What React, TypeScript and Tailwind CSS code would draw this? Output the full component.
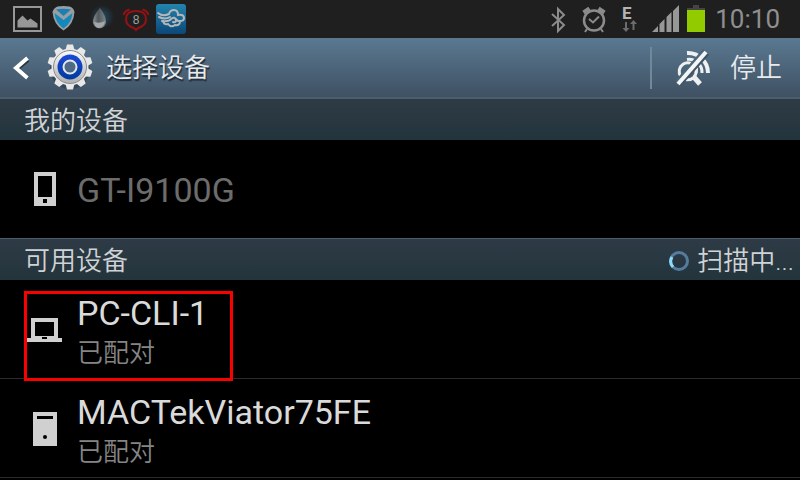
import type { ReactNode } from "react";

const StatusBar = () => {
  return (
    <div className="flex h-[38px] items-center bg-[#1f1f1f] pr-5 pl-3">
      <div className="flex flex-1 items-center">
        <svg className="mr-[10px]" width="30" height="38" viewBox="12 0 30 38">
          <rect x="14" y="7" width="27" height="24" fill="#1c1c1c" stroke="#979797" strokeWidth="2" />
          <path d="M17.500 27.500v-7l5-5 5 5 3-2 7 5v4z" fill="#979797" />
        </svg>
        <svg className="mr-[10px]" width="24" height="38" viewBox="52 0 24 38">
          <path d="M52.500 12q1-4 5-5.500 6-1 12 0 4 1 5 5.500-1 13-11 18.500-10-6-11-18.500z" fill="#989fa3" />
          <path d="M54.500 13l9 7 9-7q-1 10-9 15.500-8-5.500-9-15.500z" fill="#1488bd" />
          <path d="M56 9.500q7-1.500 15 0l-7.500 6.500z" fill="#1c7fb0" />
        </svg>
        <svg className="mr-2" width="28" height="38" viewBox="86 0 28 38">
          <defs>
            <radialGradient id="glow">
              <stop offset="0" stopColor="#24506a" />
              <stop offset="1" stopColor="#1f1f1f" />
            </radialGradient>
            <linearGradient id="drop" x1="0" y1="0" x2="1" y2="0">
              <stop offset="0" stopColor="#8d9294" />
              <stop offset=".4" stopColor="#50585c" />
              <stop offset="1" stopColor="#7d8386" />
            </linearGradient>
          </defs>
          <circle cx="102" cy="17" r="12" fill="url(#glow)" />
          <path d="M100 8q6 8 6 14a6.500 6.500 0 0 1-13 0q0-6 7-14z" fill="url(#drop)" />
          <path d="M94 22q6 2 11-1-1 7-6 7-4 0-5-6z" fill="#a5a8aa" />
        </svg>
        <svg className="mr-[6px]" width="28" height="38" viewBox="122 0 28 38">
          <g fill="none" stroke="#941214" strokeWidth="2">
            <path d="M123.500 15q1-4 6-5.500M142.500 9.500q5 1.500 6 5.500" />
            <path d="M126 19q0-8 10-8t10 8q0 7-8 9l-2 2-2-2q-8-2-8-9z" />
          </g>
          <text x="136" y="24" textAnchor="middle" fill="#a2a2a2" fontSize="12" fontWeight="400" fontFamily="Liberation Sans, sans-serif">
            8
          </text>
        </svg>
        <svg width="31" height="38" viewBox="157 0 31 38">
          <defs>
            <linearGradient id="weather" x1="0" y1="0" x2="0" y2="1">
              <stop offset="0" stopColor="#2384ae" />
              <stop offset="1" stopColor="#0b4778" />
            </linearGradient>
          </defs>
          <rect x="157" y="4" width="30" height="30" rx="3" fill="url(#weather)" />
          <g fill="none" stroke="#b4b7b9" strokeWidth="2" strokeLinecap="round">
            <path d="M159 13q5 4 11 1 1-4 5-4 4 0 4 5 6-1 6 3 0 3-4 3 0 5-5 4-4 3-7-1-4 1-5-3" />
            <path d="M160 17q6 3 11 0M163 21q7 1 9-2 4-3 5 1 0 3-3 2M180 21q-2 0-3-2" />
          </g>
        </svg>
      </div>
      <svg width="170" height="38" viewBox="545 0 170 38">
        <path d="M552 14l12 11-6 6V9l6 6-12 11" fill="none" stroke="#8b8b8b" strokeWidth="2" />
        <g fill="none" stroke="#8b8b8b">
          <circle cx="594" cy="20.500" r="10" strokeWidth="2.500" />
          <path d="M589 19l4 3.500 6-6" strokeWidth="2" />
          <path d="M583.500 12.500l6-4M604.500 12.500l-6-4" strokeWidth="4" />
          <path d="M587 29l-2 3M601 29l2 3" strokeWidth="2" />
        </g>
        <text x="622" y="19" fill="#b4b4b4" fontSize="17" fontWeight="700" fontFamily="Roboto, sans-serif">
          E
        </text>
        <path d="M625 22h2v6h2.500l-3.500 4-3.500-4h2.500zM632.500 30h2v-6h2.500l-3.500-4-3.500 4h2.500z" fill="#6c6c6c" />
        <path d="M652 32l6-6v6zM659.500 32v-8l5-5v13zM666.500 32V17l5-5v20zM673 32V11l6-6v27z" fill="#979797" />
        <path d="M693 5h6v3h6v2h-18V8h6z" fill="#444" />
        <path d="M687 10h18v22h-18z" fill="#91cb00" />
      </svg>
      <span className="font-[Roboto,sans-serif] text-[26px] leading-9 font-normal text-[#8f8f8f]">10:10</span>
    </div>
  );
};

const teeth = [0, 36, 72, 108, 144, 180, 216, 252, 288, 324];

const SettingsIcon = () => {
  return (
    <svg width="48" height="50" viewBox="0 0 48 50">
      <defs>
        <linearGradient id="metal" x1="0" y1="0" x2="0" y2="1">
          <stop offset="0" stopColor="#fafafa" />
          <stop offset="1" stopColor="#b0b0b0" />
        </linearGradient>
        <linearGradient id="ring" x1="0" y1="0" x2="0" y2="1">
          <stop offset="0" stopColor="#1a48d8" />
          <stop offset="1" stopColor="#003c9c" />
        </linearGradient>
      </defs>
      <circle cx="24" cy="26" r="20" fill="#26333f" opacity=".5" />
      <g fill="#e8e8e8">
        {teeth.map((angle) => (
          <path key={angle} d="M19.500 7l1.500-5.500h6L28.500 7z" transform={`rotate(${angle} 24 24)`} />
        ))}
        <circle cx="24" cy="24" r="18.500" />
      </g>
      <circle cx="24" cy="24" r="16.500" fill="url(#metal)" stroke="#8d8d8d" />
      <circle cx="24" cy="24" r="12.500" fill="url(#ring)" />
      <circle cx="24" cy="24" r="6.500" fill="#4d6b87" stroke="#e3e6ea" strokeWidth="2" />
    </svg>
  );
};

const StopScanIcon = () => {
  return (
    <svg width="34" height="40" viewBox="0 0 34 40">
      <g fill="none" stroke="#eef0f2" strokeWidth="3">
        <path d="M17 30a8.500 8.500 0 1 1 2-11q3 5-1 10" />
        <path d="M11 5a20 20 0 0 1 21 20" strokeWidth="4" />
        <path d="M11 11.500a13 13 0 0 1 15 13.500M20 18q1 3 0 7" />
      </g>
      <path d="M17 28l7 8" stroke="#eef0f2" strokeWidth="5" />
      <path d="M0 34L28 2" stroke="#4c6579" strokeWidth="3" />
      <path d="M4 37L32 6" stroke="#405467" strokeWidth="3" />
      <path d="M2 36L30 4" stroke="#f4f5f6" strokeWidth="4" />
    </svg>
  );
};

const Header = () => {
  return (
    <header className="flex h-[60px] items-center border-b border-[#4b5e6c] bg-linear-to-b from-[#5a7991] to-[#3f5163] pr-[18px] pl-3 text-[#e8eaec]">
      <a href="#back" aria-label="Back" className="flex flex-1 items-center">
        <svg width="18" height="26" viewBox="0 0 18 26">
          <path d="M16 5L5 14l11 9" fill="none" stroke="#26333f" strokeWidth="4" />
          <path d="M15.500 3L4 13l11.500 10" fill="none" stroke="#fff" strokeWidth="4" />
        </svg>
        <span className="ml-4">
          <SettingsIcon />
        </span>
        <h1 className="ml-3 text-[26px] leading-9 text-shadow-[1px_2px_1px_#1f2b36]">选择设备</h1>
      </a>
      <div className="mr-6 h-[42px] w-[2px] bg-[#71889b]" />
      <button className="flex items-center gap-5 text-[26px] leading-9">
        <StopScanIcon />
        停止
      </button>
    </header>
  );
};

const SectionTitle = ({ title, children }: { title: string; children?: ReactNode }) => {
  return (
    <div className="flex h-[42px] items-center justify-between border-t border-[#4b5e6c] bg-linear-to-b from-[#2e3b46] to-[#23343c] pt-[2px] pr-[6px] pl-6 text-[26px] leading-9 text-[#d0d3d5]">
      <h2>{title}</h2>
      {children}
    </div>
  );
};

const PhoneIcon = () => (
  <svg width="36" height="36" viewBox="0 0 36 36">
    <path d="M7 1h22v34H7zM11 5v21h14V5zM16 28v4h4v-4z" fill="#d0d0d0" fillRule="evenodd" />
  </svg>
);

const LaptopIcon = () => (
  <svg width="36" height="36" viewBox="0 0 36 36">
    <path d="M4 6h27v20h4v4H0v-4h4zM8 10v14h19V10zM15 25v2h5v-2z" fill="#d0d0d0" fillRule="evenodd" />
  </svg>
);

const ComputerIcon = () => (
  <svg width="36" height="36" viewBox="0 0 36 36">
    <path d="M6 1h24v34H6zM10 5v3h16V5z" fill="#d0d0d0" fillRule="evenodd" />
    <circle cx="18" cy="26" r="2" fill="#000" />
  </svg>
);

type DeviceProps = {
  name: string;
  icon: ReactNode;
};

const OwnDevice = ({ name, icon }: DeviceProps) => {
  return (
    <div className="flex h-[98px] items-center pl-[27px]">
      {icon}
      <span className="ml-[14px] pt-[2px] text-[34px] leading-10 font-normal text-[#6c6c6c]">{name}</span>
    </div>
  );
};

const Device = ({ name, status, icon, marked }: DeviceProps & { status: string; marked?: boolean }) => {
  return (
    <li className="relative">
      <button className="flex h-[98px] w-full items-center pt-[2px] pl-[27px] text-left">
        {icon}
        <span className="ml-[14px] flex flex-col pt-[6px]">
          <span className="text-[34px] leading-10 font-normal text-[#dadada]">{name}</span>
          <span className="text-[26px] leading-10 text-[#858585]">{status}</span>
        </span>
      </button>
      {marked && <div className="absolute top-[11px] left-[24px] h-[90px] w-[209px] border-3 border-[#fb0000]" />}
    </li>
  );
};

export default function App() {
  return (
    <main className="min-h-screen bg-black font-[Roboto,'Noto_Sans_CJK_SC',sans-serif] font-[350]">
      <StatusBar />
      <Header />
      <SectionTitle title="我的设备" />
      <OwnDevice name="GT-I9100G" icon={<PhoneIcon />} />
      <SectionTitle title="可用设备">
        <span className="flex items-center gap-2">
          <svg width="20" height="20" viewBox="0 0 20 20" fill="none" strokeWidth="3">
            <circle cx="10" cy="10" r="8.500" stroke="#557b9f" />
            <path d="M4 16a8.500 8.500 0 0 1-1-10" stroke="#8bdcf8" />
          </svg>
          扫描中...
        </span>
      </SectionTitle>
      <ul className="divide-y divide-[#2a2a2a] border-b border-[#2a2a2a]">
        <Device name="PC-CLI-1" status="已配对" icon={<LaptopIcon />} marked />
        <Device name="MACTekViator75FE" status="已配对" icon={<ComputerIcon />} />
      </ul>
    </main>
  );
}
